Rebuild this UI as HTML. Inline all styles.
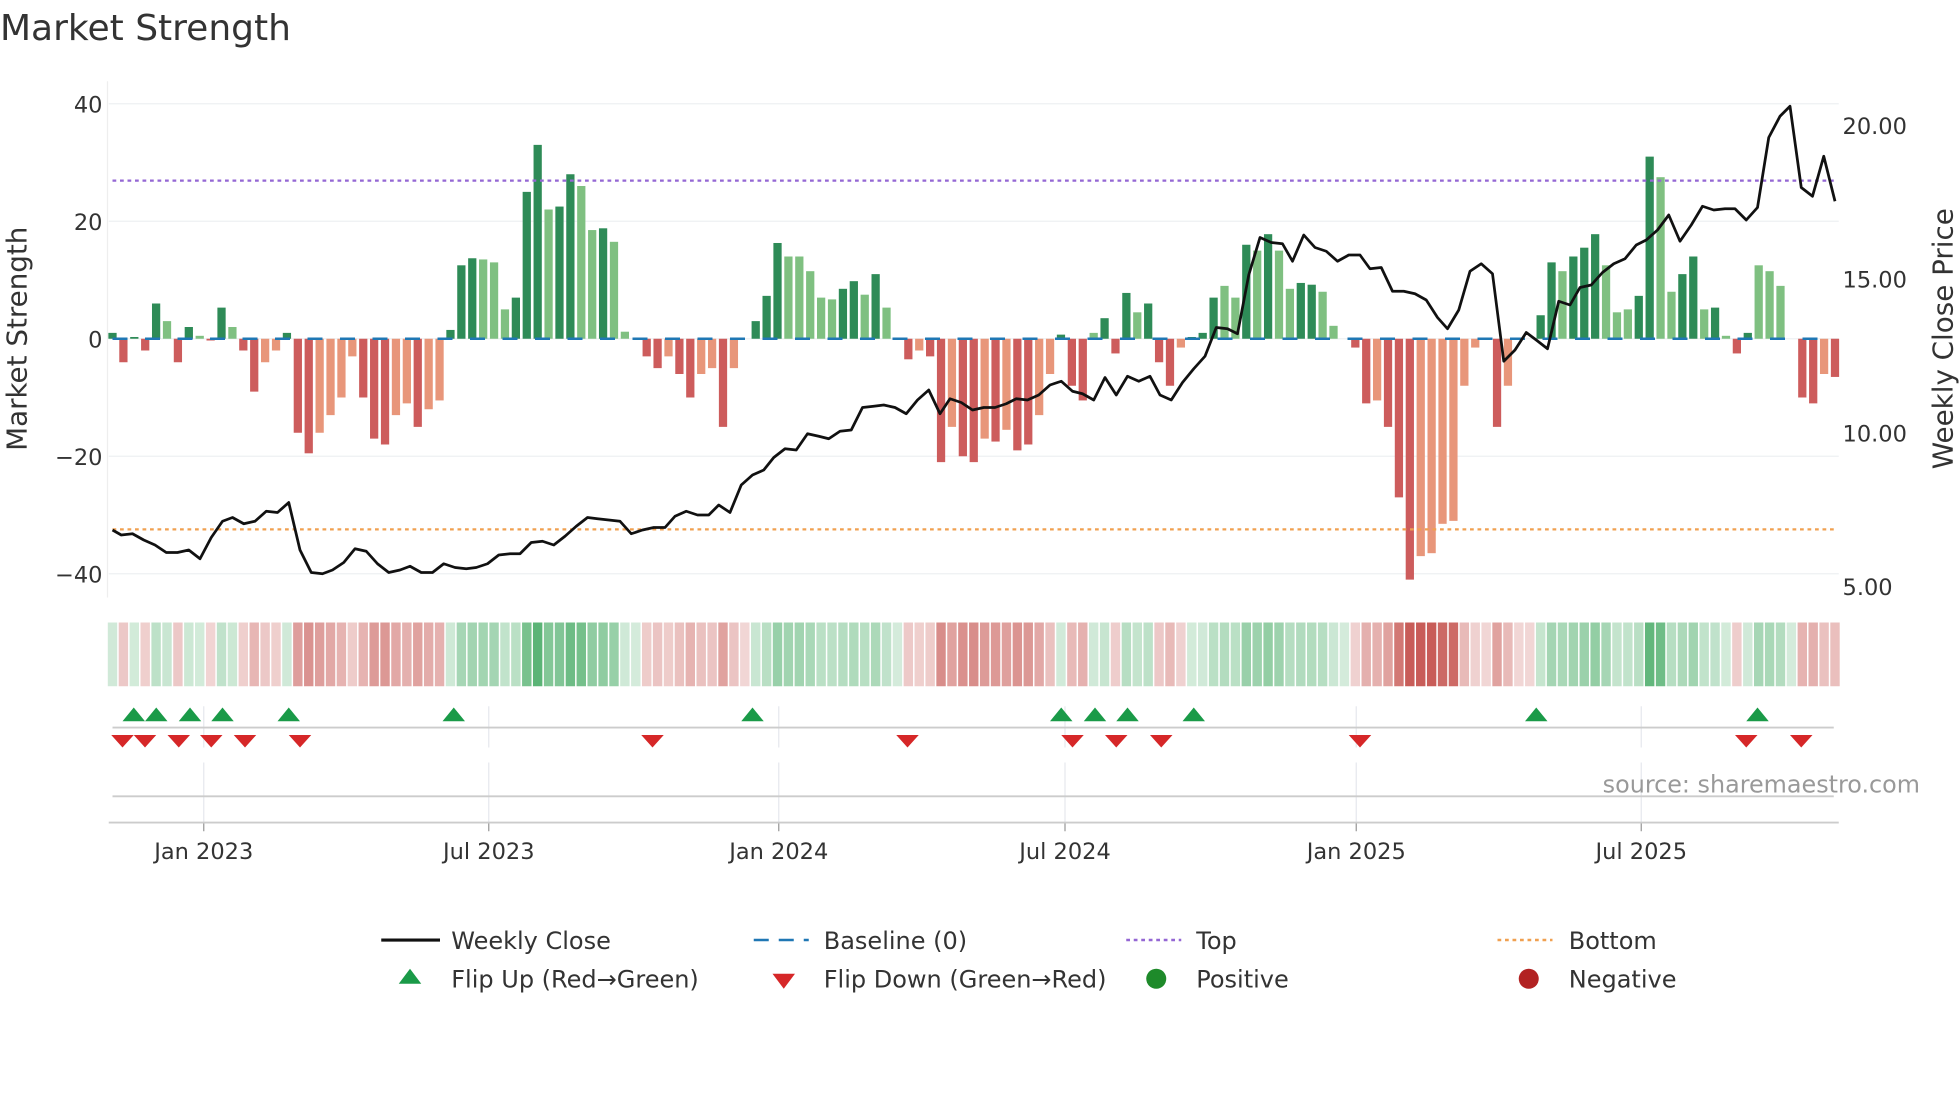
<!DOCTYPE html>
<html><head><meta charset="utf-8"><style>
html,body{margin:0;padding:0;background:#fff;width:1960px;height:1102px;overflow:hidden}
svg{display:block}
text{font-family:"DejaVu Sans","Liberation Sans",sans-serif;fill:#333}
</style></head><body>
<svg id="s" width="1960" height="1102" viewBox="0 0 1568 881.6" xmlns="http://www.w3.org/2000/svg">
<text x="0" y="32" font-size="28.8">Market Strength</text>
<g id="grid"></g>
<g id="bars"></g>
<g id="heat"></g>
<g id="tri"></g>
<g id="over"></g>
<text x="1536" y="634" font-size="19.1" text-anchor="end" style="fill:#999">source: sharemaestro.com</text>
<g font-size="18">
<text x="82" y="90" text-anchor="end">40</text>
<text x="82" y="184" text-anchor="end">20</text>
<text x="82" y="278" text-anchor="end">0</text>
<text x="82" y="372" text-anchor="end">−20</text>
<text x="82" y="466" text-anchor="end">−40</text>
<text x="1474" y="107">20.00</text>
<text x="1474" y="230">15.00</text>
<text x="1474" y="353">10.00</text>
<text x="1474" y="476">5.00</text>
<text x="163" y="687" text-anchor="middle">Jan 2023</text>
<text x="391" y="687" text-anchor="middle">Jul 2023</text>
<text x="623" y="687" text-anchor="middle">Jan 2024</text>
<text x="852" y="687" text-anchor="middle">Jul 2024</text>
<text x="1085" y="687" text-anchor="middle">Jan 2025</text>
<text x="1313" y="687" text-anchor="middle">Jul 2025</text>
</g>
<text transform="translate(21,271) rotate(-90)" font-size="22.2" text-anchor="middle">Market Strength</text>
<text transform="translate(1562,271) rotate(-90)" font-size="22.2" text-anchor="middle">Weekly Close Price</text>
<g font-size="19.2">
<line x1="305" y1="752" x2="352" y2="752" stroke="#111" stroke-width="2.5"/>
<text x="361" y="759">Weekly Close</text>
<line x1="603" y1="752" x2="647" y2="752" stroke="#1f77b4" stroke-width="2" stroke-dasharray="12,8"/>
<text x="659" y="759">Baseline (0)</text>
<line x1="901" y1="752" x2="945" y2="752" stroke="#9467d4" stroke-width="2" stroke-dasharray="3,3"/>
<text x="957" y="759">Top</text>
<line x1="1198" y1="752" x2="1242" y2="752" stroke="#f0a050" stroke-width="2" stroke-dasharray="3,3"/>
<text x="1255" y="759">Bottom</text>
<polygon points="319,787 337,787 328,775" fill="#1a9a48"/>
<text x="361" y="790">Flip Up (Red→Green)</text>
<polygon points="618,779 636,779 627,791" fill="#d62728"/>
<text x="659" y="790">Flip Down (Green→Red)</text>
<circle cx="925" cy="783" r="8" fill="#1e8a2a"/>
<text x="957" y="790">Positive</text>
<circle cx="1223" cy="783" r="8" fill="#b22222"/>
<text x="1255" y="790">Negative</text>
</g>
</svg>
<script>
var NS="http://www.w3.org/2000/svg";
function el(p,t,a){var e=document.createElementNS(NS,t);for(var k in a)e.setAttribute(k,a[k]);p.appendChild(e);return e;}
var g=document.getElementById('grid'),B=document.getElementById('bars'),H=document.getElementById('heat'),T=document.getElementById('tri'),O=document.getElementById('over');
[83,177,271,365,459].forEach(function(y){el(g,'line',{x1:87,x2:1471,y1:y,y2:y,stroke:'#eef0f3','stroke-width':1});});
el(g,'line',{x1:86,x2:86,y1:65,y2:478,stroke:'#eee','stroke-width':1});
[163,391,623,852,1085,1313].forEach(function(x){
 el(g,'line',{x1:x,x2:x,y1:565,y2:598,stroke:'#e6e8ee','stroke-width':1});
 el(g,'line',{x1:x,x2:x,y1:610,y2:658,stroke:'#e6e8ee','stroke-width':1});
 el(g,'line',{x1:x,x2:x,y1:658,y2:665,stroke:'#999','stroke-width':1});
});
el(g,'line',{x1:90,x2:1467,y1:582,y2:582,stroke:'#ccc','stroke-width':1.5});
el(g,'line',{x1:90,x2:1467,y1:637,y2:637,stroke:'#ccc','stroke-width':1.5});
el(g,'line',{x1:87,x2:1471,y1:658,y2:658,stroke:'#ccc','stroke-width':1.5});
var V="1,-4,0.3,-2,6,3l,-4,2,0.5l,-0.3,5.3,2l,-2,-9,-4l,-2l,1,-16,-19.5,-16l,-13l,-10l,-3l,-10,-17,-18,-13l,-11l,-15,-12l,-10.5l,1.5,12.5,13.7,13.5l,13l,5l,7,25,33,22l,22.5,28,26l,18.5l,18.8,16.5l,1.2l,0,-3,-5,-3l,-6,-10,-6l,-5l,-15,-5l,0,3,7.3,16.3,14l,14l,11.5l,7l,6.7l,8.5,9.8,7.5l,11,5.3l,0,-3.5,-2l,-3,-21,-15l,-20,-21,-17l,-17.5,-15.5l,-19,-18,-13l,-6l,0.7,-8,-10.5,1l,3.5,-2.5,7.8,4.5l,6,-4,-8,-1.5l,0.3,1,7,9l,7l,16,15l,17.8,15l,8.5l,9.5,9.2,8l,2.2l,0,-1.5,-11,-10.5l,-15,-27,-41,-37l,-36.5l,-31.5l,-31l,-8l,-1.5l,0,-15,-8l,0,0,4,13,11.5l,14,15.5,17.8,12.5l,4.5l,5l,7.3,31,27.5l,8l,11,14,5l,5.3,0.5l,-2.5,1,12.5l,11.5l,9l,0,-10,-11,-6l,-6.5".split(',');
var n=V.length,sp=(1468-90)/(n-1),last=1;
V.forEach(function(s,i){
 var l=s.indexOf('l')>=0,v=parseFloat(s),x=90+i*sp;
 var c=v>=0?(l?'#7fc081':'#2e8b57'):(l?'#e8967a':'#cd5c5c');
 if(v!==0){var y1=271-v*4.7;el(B,'rect',{x:x-3.3,y:Math.min(y1,271),width:6.6,height:Math.abs(v*4.7),fill:c});}
 var sg=v>0?1:(v<0?-1:last);last=sg;
 var a=0.22+0.65*Math.min(Math.abs(v)/35,1);
 el(H,'rect',{x:x-sp/2+0.6,y:498,width:sp-1.2,height:51,fill:sg>0?'#3aa55a':'#c0443f','fill-opacity':a});
});
el(O,'line',{x1:90,x2:1467,y1:271,y2:271,stroke:'#1f77b4','stroke-width':2,'stroke-dasharray':'12,14'});
el(O,'line',{x1:90,x2:1467,y1:144.5,y2:144.5,stroke:'#9467d4','stroke-width':1.8,'stroke-dasharray':'3,3'});
el(O,'line',{x1:90,x2:1467,y1:423.5,y2:423.5,stroke:'#f0a050','stroke-width':1.8,'stroke-dasharray':'3,3'});
var P=[90,424,97,428,106,427,115,432,124,436,133,442,142,442,151,440,160,447,169,430,178,417,186,414,195,419,204,417,213,409,222,410,231,402,240,440,249,458,258,459,266,456,275,450,284,439,293,441,302,451,311,458,320,456,328,453,337,458,346,458,355,451,364,454,373,455,381,454,390,451,399,444,408,443,416,443,425,434,434,433,443,436,452,429,461,421,470,414,478,415,487,416,496,417,505,427,514,424,523,422,532,422,540,413,549,409,558,412,567,412,575,404,584,410,593,388,602,380,611,376,619,366,628,359,637,360,646,347,655,349,663,351,672,345,681,344,690,326,699,325,707,324,716,326,725,331,734,320,743,312,752,331,760,319,769,322,778,328,787,326,796,326,805,323,813,319,822,320,831,316,840,308,849,305,858,313,866,315,875,320,884,302,893,316,902,301,911,305,920,301,928,316,937,320,946,306,955,295,964,285,973,262,982,263,990,267,999,220,1008,190,1017,194,1026,195,1034,209,1043,188,1052,198,1061,201,1070,209,1079,204,1088,204,1096,215,1105,214,1114,233,1123,233,1132,235,1141,240,1150,254,1158,263,1167,248,1176,217,1185,211,1194,219,1203,289,1212,280,1221,266,1229,272,1238,279,1247,241,1256,244,1264,230,1273,228,1282,218,1291,211,1300,207,1309,196,1317,192,1326,184,1335,172,1344,193,1353,180,1362,165,1371,168,1380,167,1388,167,1397,176,1406,166,1415,110,1424,93,1432,85,1441,150,1450,157,1459,125,1468,161];
var d='';for(var i=0;i<P.length;i+=2)d+=(i?'L':'M')+P[i]+','+P[i+1];
el(O,'path',{d:d,fill:'none',stroke:'#111','stroke-width':2.2,'stroke-linejoin':'round'});
[107,125,152,178,231,363,602,849,876,902,955,1229,1406].forEach(function(x){el(T,'polygon',{points:(x-9)+',577 '+(x+9)+',577 '+x+',566',fill:'#1a9a48'});});
[98,116,143,169,196,240,522,726,858,893,929,1088,1397,1441].forEach(function(x){el(T,'polygon',{points:(x-9)+',588 '+(x+9)+',588 '+x+',598',fill:'#d62728'});});
</script>
</body></html>
